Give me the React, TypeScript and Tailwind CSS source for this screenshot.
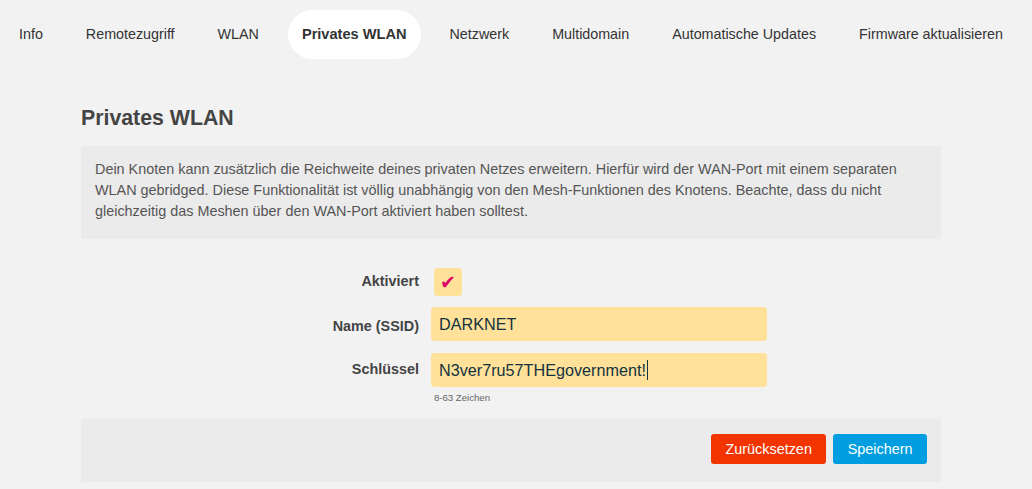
import React from "react";

const tabs = [
  "Info",
  "Remotezugriff",
  "WLAN",
  "Privates WLAN",
  "Netzwerk",
  "Multidomain",
  "Automatische Updates",
  "Firmware aktualisieren",
];

const font = { fontFamily: '"Liberation Sans", Arial, sans-serif' };

export default function App() {
  return (
    <div className="min-h-[489px] w-[1032px] bg-[#f2f2f2] text-[#444]" style={font}>
      <nav className="flex items-center gap-[15px] pl-[5px] pt-[10px]">
        {tabs.map((t) => {
          const active = t === "Privates WLAN";
          return (
            <div
              key={t}
              className={
                active
                  ? "flex h-[49px] items-center rounded-full bg-white px-[14px] text-[14.6px] font-bold text-[#333]"
                  : "flex h-[49px] items-center px-[14px] text-[14.3px] text-[#333]"
              }
            >
              {t}
            </div>
          );
        })}
      </nav>

      <main className="ml-[81px] w-[860px] pt-[46px]">
        <h2 className="text-[21.3px] font-bold leading-[26px] text-[#444]">Privates WLAN</h2>

        <div className="mt-[15px] bg-[#ebebeb] px-[14px] pt-[13px] pb-[17px] text-[14.4px] leading-[21px] text-[#555]">
          Dein Knoten kann zusätzlich die Reichweite deines privaten Netzes erweitern. Hierfür wird der
          WAN-Port mit einem separaten WLAN gebridged. Diese Funktionalität ist völlig unabhängig von den
          Mesh-Funktionen des Knotens. Beachte, dass du nicht gleichzeitig das Meshen über den WAN-Port
          aktiviert haben solltest.
        </div>

        <div className="mt-[29px] grid grid-cols-[338px_336px] items-center gap-x-[12px] gap-y-[11px]">
          <div className="text-right text-[14.4px] font-bold text-[#444]">Aktiviert</div>
          <div>
            <div className="ml-[3px] flex h-[28px] w-[28px] items-center justify-center rounded-[4px] bg-[#ffe199]">
              <span
                className="text-[19px] leading-none text-[#dc0067]"
                style={{ fontFamily: '"DejaVu Sans", sans-serif' }}
              >
                ✔
              </span>
            </div>
          </div>

          <div className="pt-[5px] text-right text-[14.4px] font-bold text-[#444]">Name (SSID)</div>
          <div className="flex h-[34px] items-center rounded-[4px] bg-[#ffe199] px-[8px] text-[16.2px] text-[#13323f]">
            DARKNET
          </div>

          <div className="mt-[1px] text-right text-[14.4px] font-bold text-[#444]">Schlüssel</div>
          <div className="mt-[1px] flex h-[34px] items-center rounded-[4px] bg-[#ffe199] px-[8px] text-[16.2px] text-[#13323f]">
            N3ver7ru57THEgovernment!
            <span className="ml-[1px] inline-block h-[20px] w-[1px] bg-[#13323f]" />
          </div>
        </div>
        <div className="ml-[353px] mt-[5px] text-[9.6px] leading-[12px] text-[#666]">8-63 Zeichen</div>

        <div className="mt-[15px] flex h-[63px] items-start justify-end gap-[7px] bg-[#ebebeb] px-[14px] pt-[15px]">
          <button className="h-[30px] rounded-[3px] bg-[#f23500] px-[14.3px] pt-[1px] text-[14.4px] text-white">
            Zurücksetzen
          </button>
          <button className="h-[30px] rounded-[3px] bg-[#009ee0] px-[14.5px] pt-[1px] text-[14.4px] text-white">
            Speichern
          </button>
        </div>
      </main>
    </div>
  );
}
